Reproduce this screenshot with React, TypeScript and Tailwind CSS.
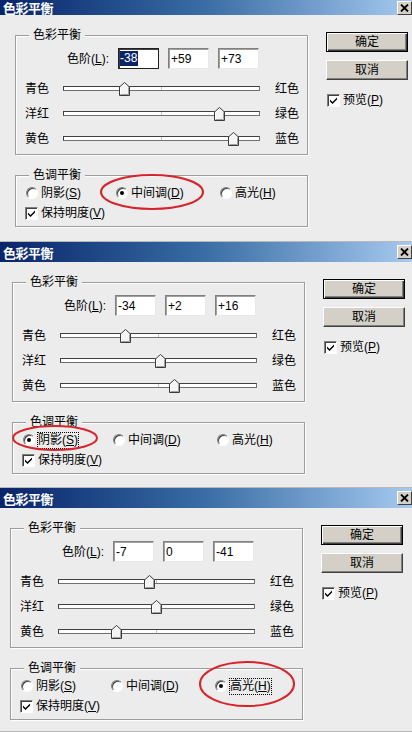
import React from "react";

const FONT = "font-['Liberation_Sans','Noto_Sans_CJK_SC',sans-serif]";

function Thumb({ v }: { v: number }) {
  const x = ((v + 100) / 200) * 197 - 5.5 - 1;
  return (
    <svg className="absolute top-[-5px]" style={{ left: x }} width="11" height="14" viewBox="0 0 11 14">
      <path d="M5.5 0.5 L10.5 5 L10.5 13.5 L0.5 13.5 L0.5 5 Z" fill="#f4f4f4" stroke="#3a3a3a" />
      <path d="M1.5 5.4 L5.5 1.8 M1.5 5.4 L1.5 12.5" stroke="#ffffff" fill="none" />
      <path d="M9.5 5.4 L9.5 12.5 L1.5 12.5" stroke="#a0a0a0" fill="none" />
    </svg>
  );
}

function Slider({ left, right, v }: { left: string; right: string; v: number }) {
  return (
    <div className="flex h-[25px] items-center">
      <span className="w-[47px] pl-[9px]">{left}</span>
      <div className="relative h-[5px] w-[197px] border border-t-[#404040] border-l-[#404040] border-b-[#707070] border-r-[#707070] bg-white">
        <div className="absolute left-[97px] top-0 h-[3px] w-px bg-[#c4c4c4]" />
        <Thumb v={v} />
      </div>
      <span className="ml-[15px]">{right}</span>
    </div>
  );
}

function Field({ value, focused }: { value: string; focused?: boolean }) {
  return (
    <div
      className={
        focused
          ? "flex h-[21px] w-[41px] items-center border border-[#202020] bg-white shadow-[inset_1px_1px_0_#404040]"
          : "flex h-[21px] w-[41px] items-center border border-t-[#808080] border-l-[#808080] border-b-[#e8e8e8] border-r-[#e8e8e8] bg-white shadow-[inset_1px_1px_0_#a0a0a0]"
      }
    >
      {focused ? (
        <span className="ml-[1px] bg-[#0a246a] pr-[1px] leading-[15px] text-white">{value}</span>
      ) : (
        <span className="ml-[2px]">{value}</span>
      )}
    </div>
  );
}

function CheckBox() {
  return (
    <div className="flex h-[13px] w-[13px] items-center justify-center border border-t-[#808080] border-l-[#808080] border-b-white border-r-white bg-white shadow-[inset_1px_1px_0_#404040]">
      <svg width="9" height="9" viewBox="0 0 9 9">
        <path d="M1 3.5 L3.5 6 L8 1.5 L8 3.5 L3.5 8 L1 5.5 Z" fill="#000" />
      </svg>
    </div>
  );
}

function Radio({
  label,
  mn,
  checked,
  focused,
  cls,
}: {
  label: string;
  mn: string;
  checked?: boolean;
  focused?: boolean;
  cls: string;
}) {
  return (
    <div className={"flex items-center " + cls}>
      <div className="flex h-[12px] w-[12px] items-center justify-center rounded-full border border-t-[#808080] border-l-[#808080] border-b-white border-r-white bg-white shadow-[inset_1px_1px_0_#404040]">
        {checked ? <div className="h-[4px] w-[4px] rounded-full bg-black" /> : null}
      </div>
      <span
        className={
          focused
            ? "ml-[3px] leading-[15px] outline-1 outline-dotted outline-black"
            : "ml-[3px] leading-[15px]"
        }
      >
        {label}(<span className="underline">{mn}</span>)
      </span>
    </div>
  );
}

function Group({ title, cls, children }: { title: string; cls: string; children: React.ReactNode }) {
  return (
    <div
      className={
        "relative w-[293px] border border-[#9c9c9c] shadow-[inset_1px_1px_0_#ffffff,1px_1px_0_#ffffff] " + cls
      }
    >
      <span className="absolute -top-[9px] left-[13px] bg-[#ececec] px-[4px] leading-[16px]">{title}</span>
      {children}
    </div>
  );
}

type DialogProps = {
  hCls: string;
  titleCls: string;
  glCls: string;
  values: [number, number, number];
  sel: 0 | 1 | 2;
  focusInput?: boolean;
  ellipse: { cx: number; cy: number; rx: number; ry: number };
  h: number;
};

function fmt(v: number) {
  return v > 0 ? "+" + v : String(v);
}

function Dialog({ hCls, titleCls, glCls, values, sel, focusInput, ellipse, h }: DialogProps) {
  return (
    <div className={"relative overflow-hidden border-b border-b-[#b8b8b8] bg-[#ececec] " + hCls}>
      <div
        className={
          "flex items-center justify-between bg-linear-to-r from-[#0a246a] via-[#3a6ea5] to-[#a6caf0] pl-[3px] " +
          titleCls
        }
      >
        <span className="font-['Noto_Sans_CJK_SC',sans-serif] text-[13px] font-bold leading-[15px] tracking-[-0.5px] text-white">
          色彩平衡
        </span>
        <div className="flex h-[14px] w-[15px] items-center justify-center border border-t-white border-l-white border-b-[#404040] border-r-[#404040] bg-[#d4d0c8]">
          <svg width="9" height="8" viewBox="0 0 9 8">
            <path d="M1 0.5 L8 7.5 M8 0.5 L1 7.5" stroke="#000" strokeWidth="1.8" />
          </svg>
        </div>
      </div>
      <div className="flex">
        <div className={"flex flex-col " + glCls}>
          <Group title="色彩平衡" cls="mt-[20px] h-[120px]">
            <div className="flex h-[21px] items-center mt-[12px]">
              <span className="w-[102px] pr-[9px] text-right">
                色阶(<span className="underline">L</span>):
              </span>
              <div className="flex gap-[9px]">
                <Field value={fmt(values[0])} focused={focusInput} />
                <Field value={fmt(values[1])} />
                <Field value={fmt(values[2])} />
              </div>
            </div>
            <div className="mt-[7px] flex flex-col">
              <Slider left="青色" right="红色" v={values[0]} />
              <Slider left="洋红" right="绿色" v={values[1]} />
              <Slider left="黄色" right="蓝色" v={values[2]} />
            </div>
          </Group>
          <Group title="色调平衡" cls="mt-[20px] h-[52px]">
            <div className="flex h-[20px] items-center mt-[7px]">
              <Radio cls="ml-[10px] w-[90px]" label="阴影" mn="S" checked={sel === 0} focused={sel === 0 && !focusInput} />
              <Radio cls="w-[104px]" label="中间调" mn="D" checked={sel === 1} focused={sel === 1 && !focusInput} />
              <Radio cls="" label="高光" mn="H" checked={sel === 2} focused={sel === 2 && !focusInput} />
            </div>
            <div className="flex h-[20px] items-center pl-[9px]">
              <CheckBox />
              <span className="ml-[3px]">
                保持明度(<span className="underline">V</span>)
              </span>
            </div>
          </Group>
        </div>
        <div className="ml-[18px] flex flex-col">
          <button className="mt-[17px] flex h-[20px] w-[82px] items-center justify-center border border-black bg-[#d4d0c8] shadow-[inset_1px_1px_0_#ffffff,inset_-1px_-1px_0_#404040,inset_-2px_-2px_0_#808080]">
            确定
          </button>
          <button className="mt-[8px] flex h-[20px] w-[82px] items-center justify-center border border-t-white border-l-white border-b-[#404040] border-r-[#404040] bg-[#d4d0c8] shadow-[inset_-1px_-1px_0_#808080]">
            取消
          </button>
          <div className="mt-[13px] flex h-[14px] items-center pl-[1px]">
            <CheckBox />
            <span className="ml-[3px]">
              预览(<span className="underline">P</span>)
            </span>
          </div>
        </div>
      </div>
      <svg className="pointer-events-none absolute left-0 top-0" width="412" height={h}>
        <ellipse
          cx={ellipse.cx}
          cy={ellipse.cy}
          rx={ellipse.rx}
          ry={ellipse.ry}
          fill="none"
          stroke="#d8232a"
          strokeWidth="2"
        />
      </svg>
    </div>
  );
}

export default function App() {
  return (
    <div className={"w-[412px] h-[732px] overflow-hidden bg-[#ececec] text-[12px] leading-[16px] text-black " + FONT}>
      <Dialog
        hCls="h-[242px]"
        titleCls="h-[15px]"
        glCls="ml-[15px]"
        values={[-38, 59, 73]}
        sel={1}
        focusInput
        ellipse={{ cx: 152, cy: 192, rx: 51, ry: 17 }}
        h={242}
      />
      <Dialog
        hCls="h-[246px]"
        titleCls="h-[20px]"
        glCls="ml-[12px]"
        values={[-34, 2, 16]}
        sel={0}
        ellipse={{ cx: 55, cy: 196, rx: 42, ry: 12 }}
        h={246}
      />
      <Dialog
        hCls="h-[244px]"
        titleCls="h-[20px]"
        glCls="ml-[10px]"
        values={[-7, 0, -41]}
        sel={2}
        ellipse={{ cx: 247, cy: 196, rx: 47, ry: 22 }}
        h={244}
      />
    </div>
  );
}
